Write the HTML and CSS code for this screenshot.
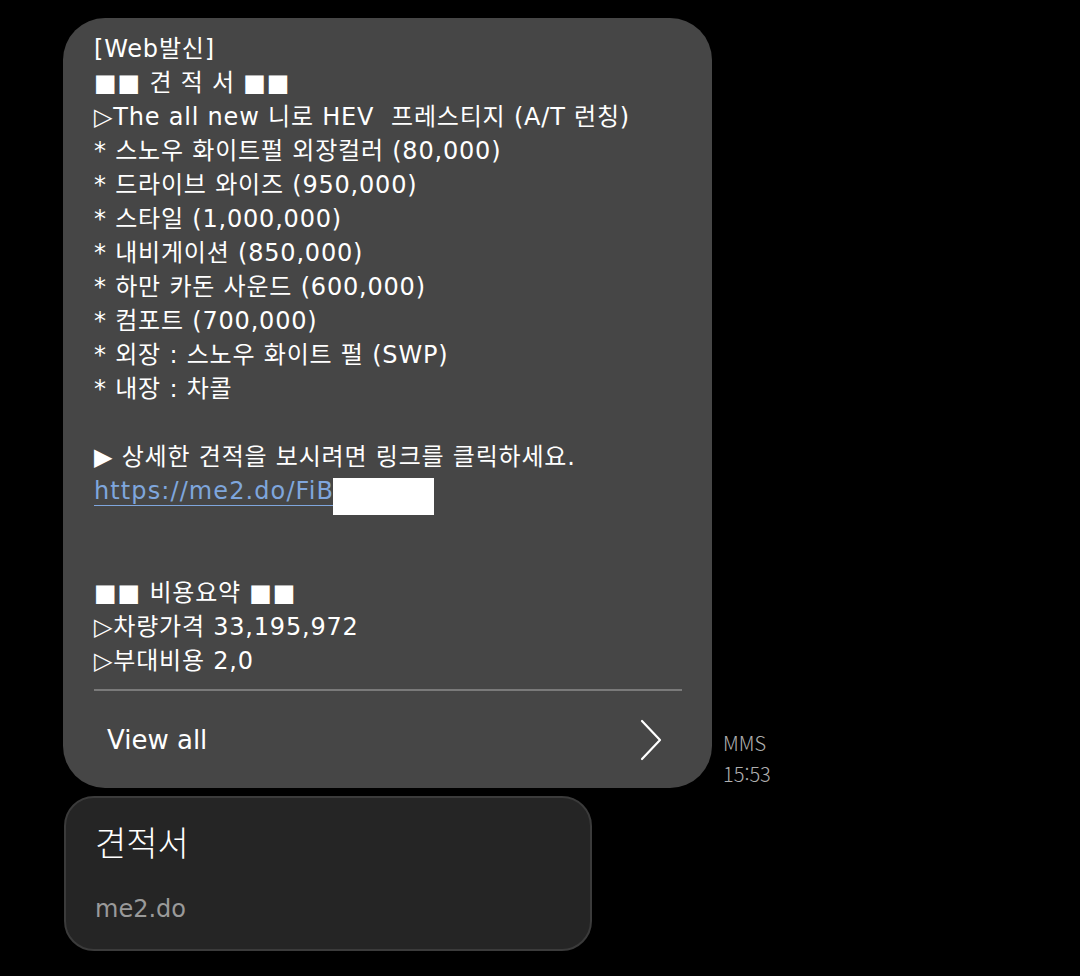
FILE: index.html
```html
<!DOCTYPE html>
<html lang="ko">
<head>
<meta charset="utf-8">
<link rel="stylesheet" href="styles.css">
</head>
<body>
<div class="thread">
  <div class="row">
    <div class="bubble">
      <div class="body">
        <div class="ln">[Web발신]</div>
        <div class="ln">■■ 견 적 서 ■■</div>
        <div class="ln">▷The all new 니로 HEV  프레스티지 (A/T 런칭)</div>
        <div class="ln">* 스노우 화이트펄 외장컬러 (80,000)</div>
        <div class="ln">* 드라이브 와이즈 (950,000)</div>
        <div class="ln">* 스타일 (1,000,000)</div>
        <div class="ln">* 내비게이션 (850,000)</div>
        <div class="ln">* 하만 카돈 사운드 (600,000)</div>
        <div class="ln">* 컴포트 (700,000)</div>
        <div class="ln">* 외장 : 스노우 화이트 펄 (SWP)</div>
        <div class="ln">* 내장 : 차콜</div>
        <div class="ln"> </div>
        <div class="ln">▶ 상세한 견적을 보시려면 링크를 클릭하세요.</div>
        <div class="ln linkline"><span class="link">https://me2.do/FiB</span><span class="redact"></span></div>
        <div class="ln"> </div>
        <div class="ln"> </div>
        <div class="ln">■■ 비용요약 ■■</div>
        <div class="ln">▷차량가격 33,195,972</div>
        <div class="ln">▷부대비용 2,0</div>
      </div>
      <div class="sep"></div>
      <div class="viewall">
        <span>View all</span>
        <svg class="chev" width="26" height="42" viewBox="0 0 26 42"><path d="M4 2 L22 21 L4 40" fill="none" stroke="#fff" stroke-width="2.2" stroke-linecap="round" stroke-linejoin="round"/></svg>
      </div>
    </div>
    <div class="meta">
      <div>MMS</div>
      <div>15:53</div>
    </div>
  </div>
  <div class="card">
    <div class="card-title">견적서</div>
    <div class="card-url">me2.do</div>
  </div>
</div>
</body>
</html>
```

FILE: styles.css
```css
html, body {
  margin: 0;
  padding: 0;
  background: #000;
}
body {
  width: 1080px;
  height: 976px;
  overflow: hidden;
  font-family: "DejaVu Sans", "Noto Sans CJK KR", sans-serif;
  color: #fff;
}
.thread {
  padding: 18px 0 0 63px;
  display: flex;
  flex-direction: column;
  gap: 8px;
}
.row {
  display: flex;
  align-items: flex-end;
  gap: 11px;
}
.bubble {
  width: 649px;
  height: 770px;
  box-sizing: border-box;
  background: #464646;
  border-radius: 42px;
  padding: 14px 30px 0 31px;
  display: flex;
  flex-direction: column;
}
.body {
  font-size: 24px;
  font-weight: 400;
  letter-spacing: 0.8px;
}
.ln {
  height: 34px;
  line-height: 34px;
  white-space: pre;
}
.linkline {
  position: relative;
}
.link {
  color: #7fa6dd;
  letter-spacing: 1.1px;
  text-decoration: underline;
  text-decoration-thickness: 1px;
  text-underline-offset: 6px;
}
.redact {
  position: absolute;
  left: 239px;
  top: 4px;
  width: 101px;
  height: 37px;
  background: #fff;
}
.sep {
  margin-top: 11px;
  height: 2px;
  background: #7a7a7a;
}
.viewall {
  display: flex;
  align-items: center;
  justify-content: space-between;
  padding: 28px 18px 0 13px;
  font-size: 26px;
}
.chev {
  display: block;
}
.meta {
  font-family: "Noto Sans CJK KR", sans-serif;
  color: #b0b0b0;
  font-size: 20px;
  font-weight: 300;
  line-height: 31px;
  margin-bottom: -1px;
}
.card {
  width: 528px;
  height: 155px;
  box-sizing: border-box;
  margin-left: 1px;
  background: #252525;
  border: 2px solid #3b3b3b;
  border-radius: 30px;
  padding: 20px 29px 0 29px;
}
.card-title {
  font-family: "Noto Sans CJK KR", sans-serif;
  font-size: 34px;
  font-weight: 300;
  line-height: 48px;
}
.card-url {
  margin-top: 28px;
  font-size: 24px;
  color: #9a9a9a;
  line-height: 30px;
}
```
